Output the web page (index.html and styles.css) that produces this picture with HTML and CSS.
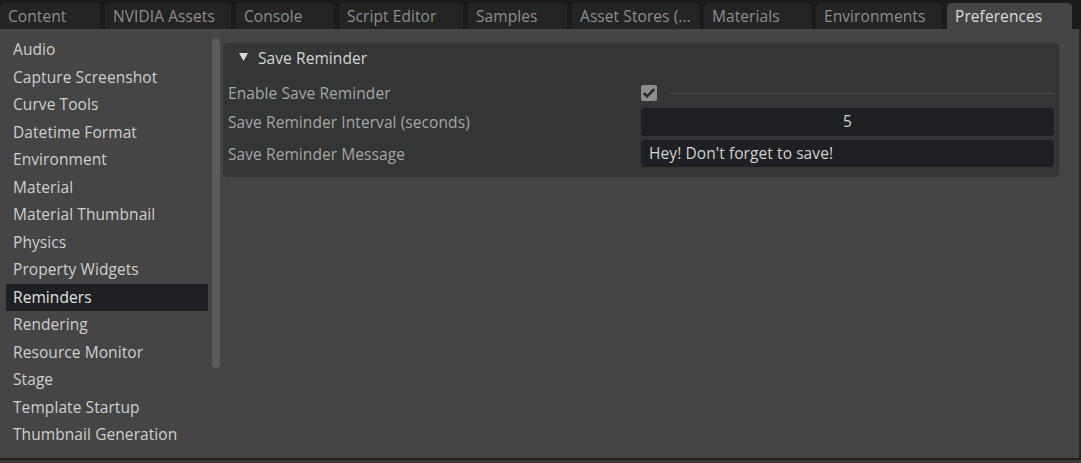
FILE: index.html
```html
<!DOCTYPE html>
<html>
<head>
<meta charset="utf-8">
<link rel="stylesheet" href="styles.css">
</head>
<body>
<div class="tabbar">
  <div class="tab">Content</div>
  <div class="tab">NVIDIA Assets</div>
  <div class="tab">Console</div>
  <div class="tab">Script Editor</div>
  <div class="tab">Samples</div>
  <div class="tab">Asset Stores (...</div>
  <div class="tab">Materials</div>
  <div class="tab">Environments</div>
  <div class="tab active">Preferences</div>
</div>
<div class="main">
  <ul class="sidebar">
    <li>Audio</li>
    <li>Capture Screenshot</li>
    <li>Curve Tools</li>
    <li>Datetime Format</li>
    <li>Environment</li>
    <li>Material</li>
    <li>Material Thumbnail</li>
    <li>Physics</li>
    <li>Property Widgets</li>
    <li class="selected">Reminders</li>
    <li>Rendering</li>
    <li>Resource Monitor</li>
    <li>Stage</li>
    <li>Template Startup</li>
    <li>Thumbnail Generation</li>
  </ul>
  <div class="scrollbar"></div>
  <div class="content">
    <section class="panel">
      <div class="panel-header">
        <svg class="tri" width="9" height="8" viewBox="0 0 9 8"><path d="M0 0H9L4.5 8Z" fill="#d8d8d8"/></svg>
        <span>Save Reminder</span>
      </div>
      <div class="rows">
        <div class="row row-check">
          <div class="label">Enable Save Reminder</div>
          <div class="value">
            <div class="checkbox"><svg width="16" height="16" viewBox="0 0 16 16"><path d="M2.8 8.2L6.2 11.4L13.2 4.2" fill="none" stroke="#262626" stroke-width="2.4"/></svg></div>
            <div class="line"></div>
          </div>
        </div>
        <div class="row row-int">
          <div class="label">Save Reminder Interval (seconds)</div>
          <div class="value"><div class="field center">5</div></div>
        </div>
        <div class="row row-str">
          <div class="label">Save Reminder Message</div>
          <div class="value"><div class="field">Hey! Don't forget to save!</div></div>
        </div>
      </div>
    </section>
  </div>
</div>
<div class="bottom"></div>
</body>
</html>
```
FILE: styles.css
```css
* { box-sizing: border-box; }
html, body { margin: 0; padding: 0; }
body {
  width: 1081px;
  height: 463px;
  overflow: hidden;
  background: #454545;
  font-family: "Open Sans", "DejaVu Sans", sans-serif;
  font-size: 15.5px;
  letter-spacing: 0.08px;
}
.tabbar {
  display: flex;
  gap: 5px;
  height: 29px;
  padding-top: 3px;
  background: #1b1b1b;
}
.tab {
  height: 26px;
  padding-left: 8px;
  line-height: 26px;
  color: #8e8e8e;
  background: #242424;
  border-radius: 4px 4px 0 0;
  white-space: nowrap;
  overflow: hidden;
}
.tab:nth-child(1) { width: 100px; }
.tab:nth-child(2) { width: 126px; }
.tab:nth-child(3) { width: 98px; }
.tab:nth-child(4) { width: 124px; }
.tab:nth-child(5) { width: 99px; }
.tab:nth-child(6) { width: 127px; }
.tab:nth-child(7) { width: 107px; }
.tab:nth-child(8) { width: 126px; }
.tab:nth-child(9) { width: 125px; }
.tab.active {
  background: #454545;
  color: #dcdcdc;
}
.main {
  display: flex;
  height: 429px;
  border-right: 2px solid #242424;
}
.sidebar {
  list-style: none;
  margin: 0 0 0 6px;
  padding: 7px 0 0 0;
  width: 202px;
}
.sidebar li {
  height: 27.5px;
  line-height: 26.5px;
  padding-left: 7px;
  color: #cfcfcf;
  white-space: nowrap;
}
.sidebar li.selected {
  background: #1f2023;
  color: #e2e2e2;
}
.scrollbar {
  width: 8px;
  height: 330px;
  margin: 9px 0 0 4px;
  background: #5c5c5c;
  border-radius: 4px;
}
.content {
  flex: 1;
  padding: 14px 20px 0 3px;
}
.panel {
  background: #343535;
  border-radius: 4px;
  padding: 0 5px 10px 5px;
}
.panel-header {
  display: flex;
  align-items: center;
  height: 30px;
  padding-left: 11px;
  color: #d4d4d4;
}
.panel-header .tri { margin-right: 10px; margin-top: -2px; }
.rows {
  display: flex;
  flex-direction: column;
  padding-top: 7px;
}
.row {
  display: flex;
  align-items: center;
}
.row-check { height: 26px; margin-bottom: 2px; }
.row-int { height: 28px; margin-bottom: 4px; }
.row-str { height: 27px; }
.label {
  width: 413px;
  color: #a6a6a6;
  white-space: nowrap;
}
.value {
  flex: 1;
  display: flex;
  align-items: center;
  height: 100%;
}
.checkbox {
  width: 16px;
  height: 16px;
  background: #8c8c8c;
  border-radius: 2px;
}
.checkbox svg { display: block; }
.line {
  flex: 1;
  height: 1px;
  margin-left: 14px;
  background: #4e4f4f;
}
.field {
  width: 413px;
  height: 100%;
  background: #1f2023;
  border-radius: 3px;
  padding-left: 8px;
  line-height: 26px;
  color: #d2d2d2;
}
.field.center { text-align: center; padding-left: 0; }
.bottom {
  height: 5px;
  border-top: 2px solid #221f1c;
  background: #3a3a3a;
}
```
